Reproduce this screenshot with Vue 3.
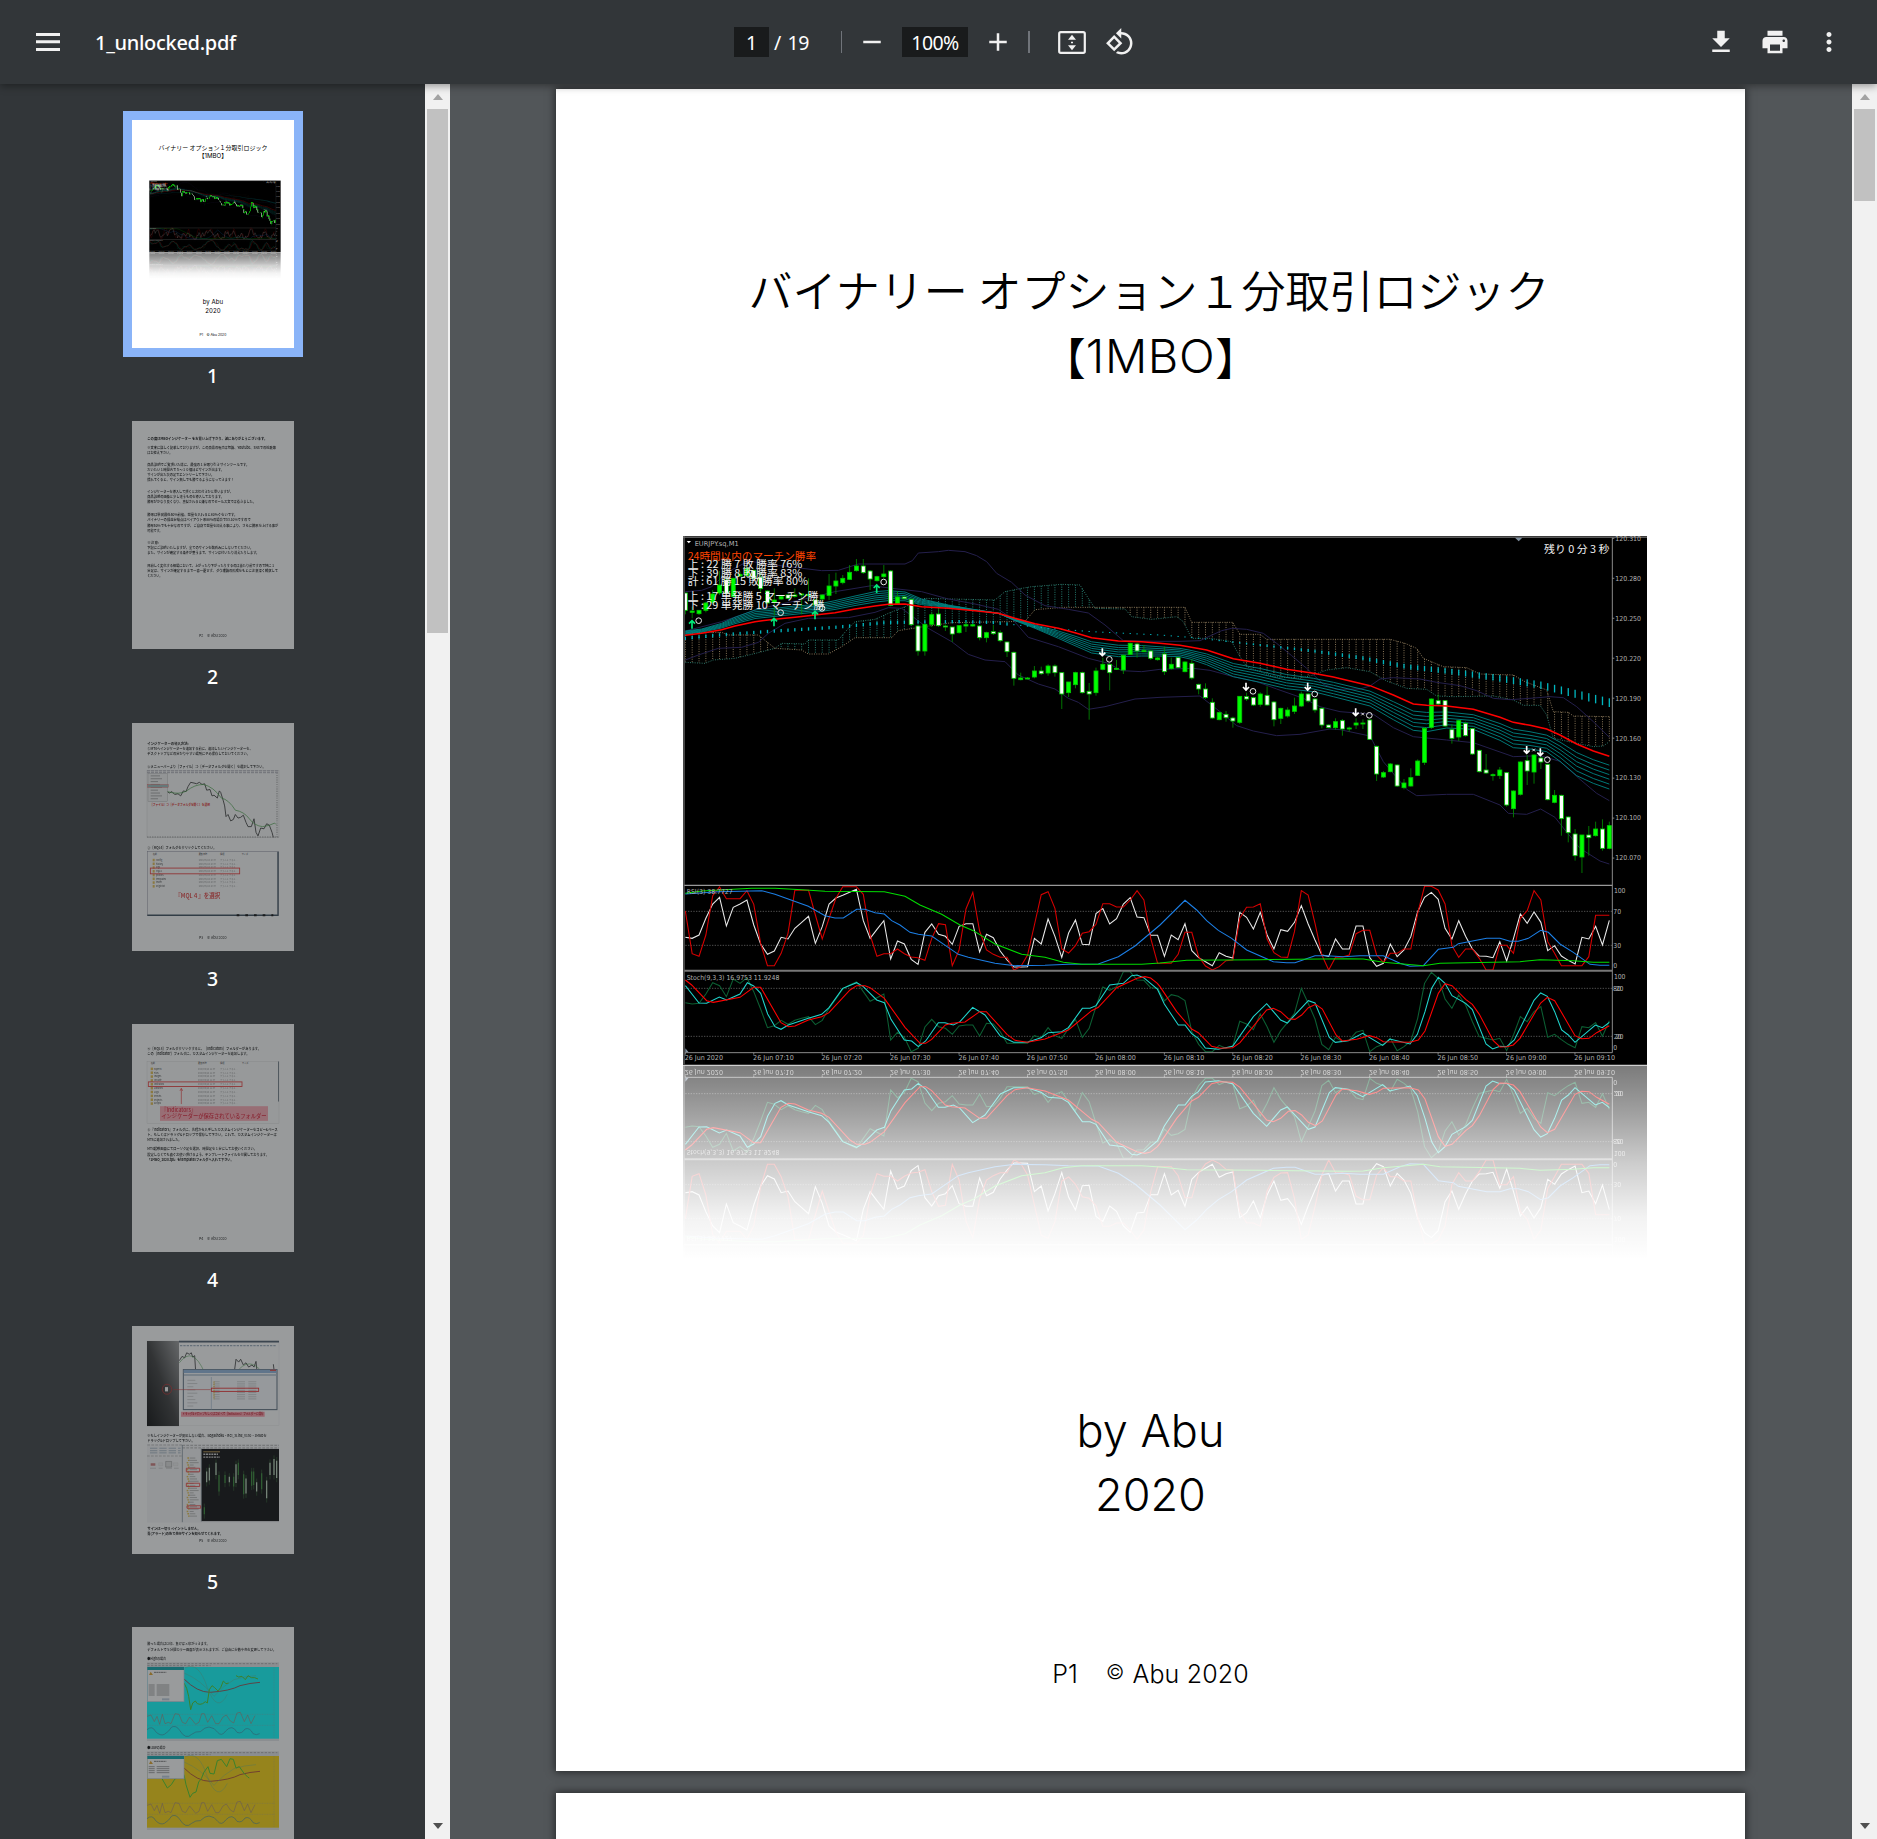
<script setup>
// Chart geometry is kept in a third-of-a-pixel grid; the right half of the
// plot is recorded relative to SPLIT and shifted when the lines are built.
const SPLIT = 1455
const STEP = 20.533
const barX = (i) => 31 + STEP * i

const parse = (s) => s.trim().split(/\s+/).map((p) => p.split(',').map(Number))
const join = (left, right) => [...parse(left), ...parse(right).map(([x, y]) => [x + SPLIT, y])]
const pts = (a) => a.map(([x, y]) => `${x.toFixed(1)},${y.toFixed(1)}`).join(' ')
const series = (s) => pts(s.trim().split(/\s+/).map((y, i) => [barX(i), Number(y)]))
const at = (line, x) => {
  for (let i = 1; i < line.length; i++) {
    if (x <= line[i][0]) {
      const [x0, y0] = line[i - 1]
      const [x1, y1] = line[i]
      return y0 + ((y1 - y0) * (x - x0)) / (x1 - x0 || 1)
    }
  }
  return line[line.length - 1][1]
}

// colour, body top, body bottom, high, low
const candles = `w,204,256,204,268 g,258,262,245,280 g,256,266,256,270 g,234,256,230,262 g,207,232,195,238 g,180,204,138,210
w,165,205,160,208 g,160,215,158,216 g,148,153,140,156 g,130,152,120,155 w,136,160,134,162 w,157,191,140,205 w,198,234,196,236
g,225,232,190,272 g,215,222,212,224 w,210,220,208,222 g,210,214,190,218 g,207,210,204,268 g,208,212,160,230 w,225,240,223,242
g,210,222,208,226 g,183,211,147,225 g,168,183,143,207 g,160,173,150,178 g,142,163,120,165 g,123,137,102,140 w,123,143,102,147
w,138,162,135,195 g,155,167,152,170 g,147,155,120,160 w,138,241,135,244 g,216,236,199,238 w,216,221,214,223 w,223,299,220,302
w,303,378,300,392 g,298,378,295,392 g,269,298,262,306 w,267,302,248,306 w,303,306,298,318 w,306,327,306,351 g,302,323,300,326
g,299,303,290,321 g,299,303,297,305 w,303,338,300,346 g,323,338,320,352 w,320,326,300,330 w,323,347,316,352 w,351,380,350,396
w,382,460,380,482 g,459,464,443,466 g,459,461,456,462 g,438,456,423,460 w,438,446,425,450 g,423,444,418,452 w,423,443,418,455
w,443,507,443,552 g,471,503,471,516 g,443,479,440,490 w,443,503,440,506 w,499,507,474,584 g,438,503,428,512 g,418,433,398,436
w,418,443,415,496 g,430,432,405,434 g,391,435,388,447 g,355,388,353,390 w,357,378,353,398 g,377,379,360,381 w,378,400,376,405
g,399,404,395,407 w,387,440,365,450 g,418,431,398,434 w,398,428,396,430 g,411,440,409,442 w,415,459,402,464 w,478,492,476,508
w,492,518,475,522 w,532,579,520,582 g,563,584,560,586 w,568,578,558,590 w,579,588,575,608 g,514,592,514,597 w,515,522,503,528
w,518,540,515,543 g,507,538,502,545 w,511,540,484,543 w,531,584,528,604 g,550,580,548,597 g,555,573,547,578 g,543,559,518,567
g,507,543,500,546 w,507,528,504,533 w,522,555,520,563 w,550,600,548,610 w,600,608,598,610 g,590,608,580,614 w,587,612,582,632
g,609,611,605,620 g,594,600,580,612 g,594,597,583,612 w,585,643,583,645 w,664,747,662,768 g,743,756,738,759 g,717,740,714,742
w,720,783,718,786 g,774,788,762,793 g,758,783,730,785 g,708,751,703,753 g,610,712,606,720 g,522,607,520,612 w,527,537,508,540
w,527,603,525,606 w,614,640,597,656 g,587,636,585,648 w,595,632,590,635 w,611,687,609,690 w,676,740,674,743 w,735,744,687,747
g,749,752,745,767 g,735,752,726,762 w,743,840,741,845 g,798,851,796,877 g,711,808,709,812 w,707,738,690,780 g,690,741,688,776
w,699,711,695,732 w,718,824,716,826 g,811,832,795,835 w,811,881,809,932 w,876,923,874,952 w,927,992,912,1007 g,930,996,930,1044
w,930,938,903,992 g,912,932,890,935 w,912,970,883,977 g,902,970,890,973`
  .trim()
  .split(/\s+/)
  .map((c, i) => {
    const [k, t, b, h, l] = c.split(',')
    return { x: barX(i), up: k === 'g', top: +t, bottom: Math.max(+b, +t + 3), high: +h, low: +l }
  })

const base = join(
  '31,331 80,325 140,314 180,303 240,290 300,283 360,277 420,270 480,263 540,252 600,243 640,238 690,237 740,245 820,250 900,257 970,265 1020,280 1080,296 1150,310 1200,323 1250,338 1330,348 1400,350',
  '0,355 60,361 90,366 140,375 220,401 300,415 380,433 460,445 520,456 630,482 700,510 760,537 800,541 860,543 940,553 1020,577 1060,592 1110,601 1160,612 1200,630 1250,657 1300,678 1348,694'
)
const edge = join(
  '31,318 80,312 140,295 180,277 240,255 300,250 360,243 420,239 480,227 540,213 600,200 640,197 690,201 740,222 820,240 900,254 970,265 1020,287 1080,310 1150,340 1200,362 1250,384 1330,395 1400,393',
  '0,393 60,395 90,402 140,419 220,455 300,472 380,491 460,500 520,515 630,543 700,584 760,616 800,620 860,609 940,613 1020,646 1060,668 1110,672 1160,680 1200,709 1250,752 1300,775 1348,792'
)
const ribbon = [0.27, 0.42, 0.56, 0.7, 0.85, 1].map((f) =>
  pts(base.map(([x, y], i) => [x, y + (edge[i][1] - y) * f]))
)
const bands = [
  join(
    '31,200 80,196 110,185 160,140 220,108 300,120 440,137 490,136 550,117 690,117 712,107 730,84 790,80 820,76 870,80 905,92 935,110 965,145 1010,172 1050,210 1110,242 1180,253 1240,264 1290,300 1345,347 1455,349',
    '60,349 120,347 150,333 185,317 215,310 260,313 310,325 350,355 395,392 440,430 490,478 530,493 600,492 630,483 660,462 700,458 780,462 830,472 900,482 950,497 1000,520 1050,524 1110,520 1170,515 1210,518 1250,545 1300,590 1348,637'
  ),
  join(
    '31,318 140,290 250,252 420,215 480,200 590,182 650,190 740,200 820,222 900,237 970,253 1010,280 1060,337 1150,365 1240,400 1300,415 1340,437 1400,440 1455,433',
    '100,430 150,436 220,455 290,470 350,492 430,520 480,545 540,560 640,568 700,608 760,635 860,645 940,653 1060,695 1140,692 1200,709 1260,763 1310,805 1348,827'
  ),
  join(
    '31,405 70,390 130,370 200,367 250,352 280,325 330,295 400,280 520,278 600,262 640,248 680,250 700,265 760,310 830,350 880,388 930,405 990,410 1030,450 1090,477 1140,492 1180,520 1210,532 1240,553 1290,545 1380,522 1455,517',
    '120,513 180,560 230,602 280,618 350,632 420,628 510,612 540,614 630,633 670,710 740,793 770,812 860,808 940,808 1020,840 1045,865 1100,868 1142,852 1185,877 1215,915 1260,970 1320,1008 1348,1017'
  )
].map(pts)

const spanA = join(
  '31,330 60,322 140,322 160,330 250,330 300,370 380,375 400,387 460,387 500,365 540,338 650,338 670,317 740,306 830,293 1050,289 1080,254 1165,247 1455,247',
  '75,247 95,292 218,292 240,328 300,328 320,343 690,343 735,355 770,370 790,400 850,425 920,428 960,447 1060,450 1095,470 1160,495 1180,560 1225,562 1240,573 1348,575'
)
const spanB = join(
  '31,412 90,415 115,405 180,400 230,388 300,370 320,355 390,357 400,345 490,345 520,310 540,290 600,283 640,265 690,245 750,220 960,225 990,200 1040,190 1070,185 1160,178 1215,180 1240,220 1260,250 1350,252 1370,275 1430,283',
  '5,280 50,275 70,290 95,340 150,340 215,350 240,395 260,425 300,440 340,455 420,460 460,450 500,435 560,428 630,440 680,468 740,490 800,493 830,513 880,515 1000,513 1060,525 1090,541 1140,541 1160,570 1180,640 1250,655 1300,665 1330,663 1348,650'
)
const cloud = candles.map(({ x }) => {
  const a = at(spanA, x)
  const b = at(spanB, x)
  return { x, y1: Math.min(a, b), y2: Math.max(a, b), color: a <= b ? '#a08a68' : '#2a9486' }
})
const trail = join(
  '31,340 133,330 300,318 480,307 640,292 850,290 950,292 1120,310 1250,320 1455,330',
  '0,330 90,337 180,347 300,360 460,378 600,398 740,425 860,438 1000,457 1140,480 1240,505 1348,533'
)
const ticks = candles.map(({ x }) => {
  const h = x < 1000 ? 10 : x < 1600 ? 3 : 3 + ((x - 1600) / 1200) * 23
  return { x, y: at(trail, x) - h / 2, h }
})

const rsiWhite = series(
  '187 190 180 130 87 67 153 97 87 75 150 207 238 228 187 192 160 142 124 205 155 87 69 61 52 43 137 190 163 137 252 198 207 253 268 172 147 178 184 208 154 146 146 231 178 188 228 255 276 276 275 190 207 132 184 247 174 135 208 209 116 101 147 131 87 68 126 128 181 181 244 180 194 146 227 248 260 272 233 244 249 112 127 162 112 180 222 164 169 142 92 147 195 240 244 192 222 222 153 153 248 274 265 207 245 225 185 110 67 52 73 160 192 137 184 222 243 244 248 200 258 190 117 145 111 142 227 212 243 256 267 187 192 154 210 136'
)
const rsiRed = series(
  '108 236 244 180 62 36 71 71 71 47 88 205 272 272 235 175 46 46 46 120 192 130 70 35 35 35 58 180 244 236 236 222 236 246 248 256 190 146 149 272 225 102 52 168 225 238 247 247 285 275 240 150 59 50 100 222 234 212 175 170 148 86 86 96 96 75 47 75 190 265 265 265 238 172 172 245 273 285 275 257 255 130 97 96 86 192 233 246 247 170 47 60 145 240 285 247 246 240 176 166 166 240 262 235 235 222 222 115 34 34 45 87 212 247 222 222 250 285 285 211 211 235 130 107 47 75 200 235 272 272 272 272 245 121 121 121'
)
const rsiBlue = pts(join(
  '31,57 130,50 260,47 300,58 400,94 450,122 480,129 505,129 545,103 570,103 600,113 628,117 650,137 675,150 705,172 730,178 770,183 790,197 850,238 880,247 960,265 1020,272 1110,271 1180,268 1270,267 1330,245 1380,213',
  '0,150 75,76 110,105 140,137 175,166 215,190 260,225 340,260 380,263 405,263 465,242 500,242 550,245 600,242 670,242 720,265 750,274 790,272 810,250 835,223 880,217 895,206 980,190 1020,190 1050,199 1075,199 1105,190 1142,166 1165,172 1200,207 1240,232 1290,268 1320,271 1348,271'
))
const rsiGreen = pts(join(
  '31,55 80,48 230,40 300,40 380,44 450,49 628,50 690,64 735,90 800,118 855,150 895,167 960,207 1040,238 1110,247 1165,262 1220,268 1400,268',
  '0,264 80,256 300,254 560,251 610,252 670,262 790,272 840,265 1080,260 1140,254 1240,257 1300,262 1348,262'
))
const stochRaw = series(
  '383 387 385 357 323 332 365 312 325 308 350 402 458 452 436 448 436 430 425 449 436 400 372 342 330 321 350 379 368 357 495 472 487 530 520 456 433 455 460 478 453 450 450 483 445 447 470 505 505 505 505 482 488 458 482 490 460 433 487 460 395 336 346 335 290 290 315 316 338 340 378 359 364 377 470 508 530 530 511 520 512 439 447 464 417 455 502 467 442 415 340 385 432 508 524 487 500 495 472 466 530 515 508 490 527 515 498 430 325 292 310 372 400 360 390 440 485 490 495 490 527 480 425 440 410 395 487 478 494 508 518 455 458 443 484 437'
)
const stochK = pts(join(
  '31,332 72,384 95,385 133,366 155,375 195,357 217,323 236,333 257,355 278,417 300,455 318,463 340,450 400,430 440,418 462,398 503,340 545,323 565,335 605,375 628,383 648,433 688,495 710,498 730,515 752,498 790,443 810,443 835,450 855,440 893,397 930,420 976,483 1016,502 1057,502 1098,488 1120,473 1160,470 1180,458 1222,400 1245,400 1263,392 1304,330 1345,325 1370,302 1386,300 1406,308 1447,342',
  '13,387 55,450 75,450 95,476 115,490 136,519 175,523 218,514 280,425 320,386 362,435 382,444 445,377 465,384 508,487 526,502 565,497 608,475 668,511 690,492 750,507 772,478 795,410 815,340 835,307 855,325 876,362 917,385 937,404 978,507 998,522 1020,514 1040,515 1063,495 1122,376 1142,354 1162,364 1184,410 1205,465 1225,480 1245,502 1306,450 1327,458 1348,442'
))
const stochD = pts(join(
  '31,315 50,330 95,377 115,382 195,367 236,337 257,337 318,443 340,455 360,453 400,435 440,425 462,413 525,345 545,332 570,332 585,338 628,370 690,457 735,505 752,505 770,493 811,450 830,445 870,441 914,410 934,410 996,478 1020,496 1057,502 1110,492 1180,465 1250,407 1270,397 1325,338 1386,310 1410,305 1427,309 1447,325',
  '0,335 50,410 95,462 115,473 155,514 180,520 218,518 240,503 320,405 340,400 362,410 385,431 405,433 425,420 445,398 467,388 487,402 528,480 547,498 590,493 628,482 650,488 670,500 750,502 775,495 795,468 835,355 855,326 876,332 917,373 937,388 958,418 1000,497 1020,516 1040,515 1060,510 1080,490 1142,384 1162,367 1184,377 1245,482 1265,491 1287,490 1310,473 1348,452'
))

const prices = ['120.310', '120.280', '120.250', '120.220', '120.190', '120.160', '120.130', '120.100', '120.070']
const times = ['26 Jun 2020', '26 Jun 07:10', '26 Jun 07:20', '26 Jun 07:30', '26 Jun 07:40', '26 Jun 07:50', '26 Jun 08:00', '26 Jun 08:10', '26 Jun 08:20', '26 Jun 08:30', '26 Jun 08:40', '26 Jun 08:50', '26 Jun 09:00', '26 Jun 09:10']
const overlay = [
  ['上 :  22 勝  7 敗  勝率 76%', 130, 344],
  ['下 :  39 勝  8 敗  勝率 83%', 155, 344],
  ['計 :  61 勝 15 敗  勝率 80%', 181, 361],
  ['上 :  17 単発勝  5 マーチン勝', 226, 392],
  ['下 :  29 単発勝 10 マーチン勝', 252, 410]
]
const rings = [[71, 287], [317, 263], [441, 250], [626, 171], [1303, 403], [1734, 499], [1919, 507], [2083, 571], [2617, 704]]
const ups = [[51, 285], [297, 278], [420, 257], [605, 178]]
const downs = [[1282, 394], [1713, 497], [1898, 497], [2042, 574], [2555, 687], [2596, 694]]
const crosses = [[2063, 567], [2576, 675]]

// text, baseline y, right end, bold
const page2 = [
  ['この度はMBOインジケーター をお買い上げ下さり、誠にありがとうございます。', 115, 472, 1],
  ['※文末に詳しく記載しておりますが、この商品の転売は勿論、Youtube、SNSでの拡散等', 140, 498],
  ['はお控え下さい。', 154, 187],
  ['商品説明でご覧頂いた様に、最強の１分取り引きサインツールです。', 188, 418],
  ['だいたい１時間内で５〜１０個ほどサインが出ます。', 202, 342],
  ['サインが出た次の足でエントリーして下さい。', 216, 313],
  ['慣れてくると、サイン無しでも勝てるようになってきます！', 230, 373],
  ['インジケーターを導入して頂くとお気付きかと思いますが、', 264, 369],
  ['商品説明の画像と少し違うものを導入しております。', 277, 342],
  ['勝率がかなり良くなり、真似されると嫌なのでセールス文では省きました。', 291, 438],
  ['勝率は単発最低60%前後、裁量を入れると80%ぐらいです。', 328, 382],
  ['バイナリーの損益分岐点はペイアウト率88%の場合で53.10%ですので', 342, 422],
  ['勝率60%でも十分なのですが、ご自身で裁量を加える事により、さらに勝率を上げる事が', 359, 505],
  ['可能です。', 373, 157],
  ['※注意:', 406, 147],
  ['下記にご説明いたしますが、全てのサインを鵜呑みにしないでください。', 420, 430],
  ['また、サインが確定する条件が整うまで、サインは付いたり消えたりします。', 434, 448],
  ['目紛しく変化する相場において、上がったり下がったりするのは当たり前ですので特に１', 471, 494],
  ['分足は、サインが確定するまで一喜一憂せず、ダウ理論の形成をもとに注意深く観察して', 485, 504],
  ['ください。', 499, 157]
]
const page3 = [
  ['インジケーターの導入方法:', 966, 236, 1],
  ['①MT4へインジケーターを追加する前に、追加したいインジケーターを、', 980, 428],
  ['デスクトップなどの分かりやすい場所に予め保存しておいてください。', 994, 420],
  ['②メニューバーより［ファイル］⇒［データフォルダを開く］を選択して下さい。', 1030, 467],
  ['③［MQL4］フォルダをクリックしてください。', 1257, 319]
]
const page4 = [
  ['④［MQL4］フォルダクリックすると、［Indicators］フォルダーがあります。', 143, 453],
  ['この［Indicator］フォルダに、カスタムインジケーターを追加します。', 157, 418],
  ['⑤『Indicators』フォルダに、先程から入手したカスタムインジケーターをコピー&ペース', 370, 503],
  ['ト、もしくはドラッグ&ドロップで保存して下さい。これで、カスタムインジケーターは', 384, 500],
  ['MT4に追加されました。', 398, 214],
  ['MT4起動画面にてローソク足を選択、時間足を１分にしてお使いください。', 423, 441],
  ['設定しなくても直ぐお使い頂けるよう、テンプレートファイルを付属しております。', 440, 477],
  ['「1MBO_2020.tpl」をtemplatesフォルダへ入れて下さい。', 454, 371, 1]
]
const page5 = [
  ['※もしインジケーターが反応しない場合、Bogashoku・RCI_3Line_v130・1MBOを', 1224, 470],
  ['ドラッグ&ドロップして下さい。', 1238, 254],
  ['サインは一切リペイントしません。', 1484, 272, 1],
  ['青(アラート)の色で先行サインを知らせてくれます。', 1498, 339, 1]
]
const page6 = [
  ['勝った場合は〇印、負けは×印がつきます。', 257, 299],
  ['デフォルトで５分間カラー画面が表示されますが、ご自由に分数や色を変更して下さい。', 276, 499],
  ['●Highの場合', 303, 168],
  ['●Lowの場合', 570, 167]
]
const thumbs = [
  { n: 2, box: '66 62 486 638', lines: page2, foot: 666 },
  { n: 3, box: '66 904 486 638', lines: page3, foot: 1509 },
  { n: 4, box: '66 70 486 638', lines: page4, foot: 675 },
  { n: 5, box: '66 913 486 638', lines: page5, foot: 1518 },
  { n: 6, box: '66 204 486 684', lines: page6 }
]
const folders3 = ['config', 'history', 'logs', 'MQL4', 'profiles', 'templates', 'tester', 'origin.txt']
const folders4 = ['Experts', 'Files', 'Images', 'Include', 'Indicators', 'Libraries', 'Logs', 'Presets', 'Projects', 'Scripts']
const bars5 = [[283, 1420, 1440], [290, 1320, 1350], [298, 1310, 1345], [318, 1296, 1330], [327, 1330, 1376], [345, 1330, 1352], [358, 1335, 1350], [371, 1335, 1362], [378, 1300, 1352], [385, 1296, 1330], [401, 1328, 1384], [408, 1340, 1382], [425, 1320, 1360], [431, 1320, 1358], [440, 1350, 1376], [455, 1325, 1370], [470, 1345, 1395], [480, 1296, 1330], [492, 1285, 1330], [500, 1290, 1338]]
</script>

<template>
  <div class="viewer">
    <header class="toolbar">
      <svg class="menu" width="24" height="18" viewBox="0 0 24 18"><path d="M0 0h24v3H0zM0 7.3h24v3H0zM0 15h24v3H0z" /></svg>
      <span class="filename">1_unlocked.pdf</span>
      <div class="center">
        <span class="field page-field">1</span>
        <span class="total">/ 19</span>
        <i class="rule thin"></i>
        <svg class="ico minus" viewBox="0 0 24 24"><path d="M19 13H5v-2h14v2z" /></svg>
        <span class="field zoom-field">100%</span>
        <svg class="ico plus" viewBox="0 0 24 24"><path d="M19 13h-6v6h-2v-6H5v-2h6V5h2v6h6v2z" /></svg>
        <i class="rule"></i>
        <svg class="fit" width="28" height="23" viewBox="0 0 28 23">
          <rect x="1.2" y="1.2" width="25.6" height="20.6" rx="1.6" fill="none" stroke="#f1f1f1" stroke-width="2.2" />
          <path d="M14 3.8l4 5h-8zM14 19.2l4-5h-8zM13 10.7h2v1.6h-2z" />
        </svg>
        <svg class="ico rotate" viewBox="0 0 24 24"><path d="M7.34 6.41L.86 12.9l6.49 6.48 6.49-6.48-6.5-6.49zM3.69 12.9l3.66-3.66L11 12.9l-3.66 3.66-3.65-3.66zm15.67-6.26C17.61 4.88 15.3 4 13 4V.76L8.76 5 13 9.24V6c1.79 0 3.58.68 4.95 2.05 2.73 2.73 2.73 7.17 0 9.9C16.58 19.32 14.79 20 13 20c-.97 0-1.94-.21-2.84-.61l-1.49 1.49C10.02 21.62 11.51 22 13 22c2.3 0 4.61-.88 6.36-2.64 3.52-3.51 3.52-9.21 0-12.72z" /></svg>
      </div>
      <div class="actions">
        <svg class="ico" viewBox="0 0 24 24"><path d="M19 9h-4V3H9v6H5l7 7 7-7zM5 18v2h14v-2H5z" /></svg>
        <svg class="ico" viewBox="0 0 24 24"><path d="M19 8H5c-1.66 0-3 1.34-3 3v6h4v4h12v-4h4v-6c0-1.66-1.34-3-3-3zm-3 11H8v-5h8v5zm3-7c-.55 0-1-.45-1-1s.45-1 1-1 1 .45 1 1-.45 1-1 1zm-1-9H6v4h12V3z" /></svg>
        <svg class="ico" viewBox="0 0 24 24"><path d="M12 8c1.100 0 2-.9 2-2s-.9-2-2-2-2 .9-2 2 .9 2 2 2zm0 2c-1.100 0-2 .9-2 2s.9 2 2 2 2-.9 2-2-.9-2-2-2zm0 6c-1.100 0-2 .9-2 2s.9 2 2 2 2-.9 2-2-.9-2-2-2z" /></svg>
      </div>
    </header>

    <div class="body">
      <nav class="sidebar">
        <div class="item">
          <div class="frame selected">
            <svg class="thumb" viewBox="0 0 1189 1682" preserveAspectRatio="none">
              <rect width="1189" height="1682" fill="#fff" />
              <g class="cover" text-anchor="middle" font-size="45">
                <text class="jp" x="594" y="218" font-size="44">バイナリー オプション１分取引ロジック</text>
                <text x="594" y="284">【1MBO】</text>
                <text x="594" y="1359">by Abu</text>
                <text x="594" y="1423">2020</text>
                <text x="594" y="1595" font-size="25">P1　© Abu 2020</text>
              </g>
              <use href="#figure" transform="translate(119 436) scale(.33333)" />
            </svg>
          </div>
          <span class="label">1</span>
        </div>
        <div v-for="t in thumbs" :key="t.n" class="item">
          <div class="frame">
            <svg class="thumb dim" :viewBox="t.box" preserveAspectRatio="none">
              <rect x="0" y="0" width="700" height="1700" fill="#fff" />
              <template v-if="t.n === 3">
                <rect x="111" y="1037" width="396" height="188" fill="#fbfbfb" stroke="#bbb" stroke-width="1" />
                <path d="M111 1038h396M111 1043h396" stroke="#889" stroke-width="2" stroke-dasharray="9 3" />
                <path d="M501 1045v178M111 1223h396" stroke="#999" stroke-width="4" stroke-dasharray="2 3" />
                <path d="M172 1096l6 4 8-4 8 8 10-2 8 6 8-14 8 2 6-14 8-12 10 2 8 2 8-4 8 6 8-2 6 18 10-2 6 18 6-2 10 8 6-20 4 4 8 24 4 14 4 30 6-6 8 18 8-4 6-14 8 10 8-2 8-6 8 20 6 12 10 0 8-22 6 38 6 10 8-22 10 2 8-14 8 4 8 20 4 14" fill="none" stroke="#333" stroke-width="2.600" />
                <path d="M172 1096q36 10 58-2q24-18 50-18q30 6 54 38q22 4 42 34q26 4 42 24q16 20 40 22q20-2 36-10l4 4" fill="none" stroke="#3a9a3a" stroke-width="2" />
                <rect x="114" y="1045" width="58" height="79" fill="#f3f3f3" stroke="#999" />
                <path v-for="k in 9" :key="k" :d="`M122 ${1044 + k * 8}h${22 + (k % 3) * 6}`" stroke="#999" stroke-width="2.500" />
                <rect x="113" y="1076" width="62" height="8" fill="#9bb" stroke="#e44" />
                <text class="jp" x="120" y="1137" font-size="9.500" fill="#e02020" font-weight="700" textLength="180" lengthAdjust="spacingAndGlyphs">［ファイル］⇒［データフォルダを開く］を選択</text>
                <rect x="112" y="1264" width="394" height="178" fill="#fcfcfc" stroke="#889" stroke-width="1.500" />
                <path d="M504 1264v178M112 1442h394" stroke="#345" stroke-width="4" />
                <path d="M380 1442h110" stroke="#000" stroke-width="6" stroke-dasharray="8 18" />
                <g class="tiny">
                  <text x="128" y="1274">名前</text><text x="266" y="1274">更新日時</text><text x="330" y="1274">種類</text><text x="395" y="1274">サイズ</text>
                  <g v-for="(f, k) in folders3" :key="f">
                    <rect x="128" :y="1284 + k * 10.5" width="6" height="7" fill="#e4bd4a" />
                    <text x="138" :y="1290 + k * 10.5">{{ f }}</text>
                    <text x="266" :y="1290 + k * 10.5" opacity=".6">2020/05/28 10:37</text>
                    <text x="330" :y="1290 + k * 10.5" opacity=".6">ファイル フォル...</text>
                  </g>
                </g>
                <rect x="121" y="1310" width="268" height="16" fill="none" stroke="#e33" stroke-width="2.500" />
                <text class="jp" x="196" y="1394" font-size="18" fill="#e02020" font-weight="500" textLength="135" lengthAdjust="spacingAndGlyphs">『MQL４』を選択</text>
              </template>
              <template v-if="t.n === 4">
                <rect x="111" y="175" width="396" height="174" fill="#fcfcfc" stroke="#ccc" />
                <path d="M505.500 175v112" stroke="#345" stroke-width="2" />
                <g class="tiny">
                  <text x="122" y="182">名前</text><text x="264" y="182">更新日時</text><text x="330" y="182">種類</text><text x="396" y="182">サイズ</text>
                  <g v-for="(f, k) in folders4" :key="f">
                    <rect x="122" :y="192 + k * 10.8" width="7" height="7" fill="#e4bd4a" />
                    <text x="132" :y="198 + k * 10.8">{{ f }}</text>
                    <text x="264" :y="198 + k * 10.8" opacity=".6">2020/05/28 11:37</text>
                    <text x="330" :y="198 + k * 10.8" opacity=".6">ファイル フォル...</text>
                  </g>
                </g>
                <rect x="115" y="232" width="281" height="13" fill="none" stroke="#e33" stroke-width="2.500" />
                <path d="M214 294v-43m-4 6l4-7 4 7" fill="none" stroke="#e33" stroke-width="2" />
                <rect x="150" y="300" width="324" height="41" fill="#ffa6b2" />
                <g class="jp" fill="#e01830" font-weight="500" font-size="16">
                  <text x="154" y="317" textLength="104" lengthAdjust="spacingAndGlyphs">『Indicators』</text>
                  <text x="154" y="332" textLength="316" lengthAdjust="spacingAndGlyphs">インジケーターが保存されているフォルダー</text>
                </g>
              </template>
              <template v-if="t.n === 5">
                <rect x="111" y="955" width="396" height="237" fill="#fff" stroke="#ddd" />
                <rect x="111" y="955" width="96" height="238" fill="url(#desk)" />
                <path d="M207 957h300" stroke="#456" stroke-width="5" />
                <path d="M210 968h290" stroke="#9ab" stroke-width="4" stroke-dasharray="7 3" />
                <path d="M208 1010l8-12 8 4 6-14 8 4 6-4 4 12 6-4 4 60m114-8l6-42 8 8 6-8 8 16 8-6 8 12 10-6 6 6 6-16 4 38m48-30l4 30v60" fill="none" stroke="#333" stroke-width="2.500" />
                <path d="M208 1016q40-50 76 28m94 0q40-50 80 0" fill="none" stroke="#3a9a3a" stroke-width="1.500" />
                <rect x="220" y="1035" width="281" height="112" fill="#fafcff" stroke="#567" stroke-width="3" />
                <path d="M221 1040h279" stroke="#8fb4dc" stroke-width="9" />
                <path d="M480 1037h18" stroke="#d44" stroke-width="4" />
                <path d="M222 1050h278" stroke="#abc" stroke-width="4" /><path d="M304 1056v90" stroke="#bcd" stroke-width="3" />
                <path v-for="k in 9" :key="k" :d="`M232 ${1056 + k * 9}h${18 + (k % 3) * 6}M312 ${1063 + k * 6}h17m52 0h24m10 0h24`" stroke="#bbb" stroke-width="2" />
                <path d="M312 1068v50" stroke="#e4bd4a" stroke-width="4" stroke-dasharray="4 2" />
                <path d="M165 1084h9v12h-9z" fill="#fff" />
                <circle cx="171" cy="1090" r="14" fill="none" stroke="#c22" stroke-width="2" />
                <path d="M190 1091h112" stroke="#c22" stroke-width="1.500" />
                <rect x="304" y="1087" width="142" height="9" fill="none" stroke="#e22" stroke-width="2.500" />
                <rect x="213" y="1153" width="251" height="14" fill="#ff9aa8" />
                <text class="jp" x="217" y="1163" font-size="8.500" fill="#c01020" font-weight="700" textLength="244" lengthAdjust="spacingAndGlyphs">ドラッグ&ドロップもしくはコピペで［Indicators］フォルダーに保存</text>
                <rect x="111" y="1244" width="396" height="219" fill="#f6f6f6" />
                <path d="M111 1277h104M112 1246h104M217 1247h290M217 1254h290" stroke="#bbb" stroke-width="3" stroke-dasharray="8 4" />
                <path d="M120 1255h92M120 1262h92M120 1268h92" stroke="#9ab" stroke-width="2.500" stroke-dasharray="22 6" />
                <path d="M122 1297h14v7h-14z" fill="#c77" /><path d="M167 1292h18v16h-18z" fill="#ddd" stroke="#555" />
                <path d="M146 1296h12v8h-12zM190 1296h14v8h-14z" fill="#eee" stroke="#ccc" />
                <path d="M120 1311h18m8 0h12m10 0h18m6 0h14" stroke="#bbb" stroke-width="2" />
                <path d="M217 1246v216M274 1256v204" stroke="#678" stroke-width="2" />
                <path v-for="k in 26" :key="'t' + k" :d="`M${230 + (k % 3) * 2} ${1276 + k * 6.500}h5`" stroke="#e4bd4a" stroke-width="4" />
                <path v-for="k in 26" :key="'u' + k" :d="`M239 ${1276 + k * 6.500}h${12 + (k % 4) * 5}`" stroke="#aaa" stroke-width="2.500" />
                <path d="M229 1311h40v10h-40zM229 1353h40v9h-40zM231 1416h41v7h-41z" fill="none" stroke="#e33" stroke-width="2.500" />
                <rect x="275" y="1257" width="232" height="202" fill="#000" />
                <path d="M280 1265h50" stroke="#a84" stroke-width="3" /><path d="M280 1272h44M280 1280h50" stroke="#ccc" stroke-width="4" stroke-dasharray="6 2" />
                <g v-for="b in bars5" :key="b[0]">
                  <path :d="`M${b[0]} ${b[1] - 10}V${b[2] + 12}`" stroke="#2a6a2a" stroke-width="1.500" />
                  <path :d="`M${b[0]} ${b[1]}V${b[2]}`" :stroke="b[0] % 2 ? '#2f8a2f' : '#c8e0c8'" stroke-width="3.500" />
                </g>
              </template>
              <template v-if="t.n === 6">
                <g v-for="m in [{ y: 310, c: '#00a3a8', h: 236 }, { y: 577, c: '#fad200', h: 236 }]" :key="m.y">
                  <rect x="111" :y="m.y" width="396" :height="m.h" fill="#e4e6e8" />
                  <path :d="`M112 ${m.y + 4}h390M112 ${m.y + 10}h190`" stroke="#aaa" stroke-width="3" stroke-dasharray="7 4" />
                  <rect x="111" :y="m.y + 14" width="396" height="215" :fill="m.y < 400 ? '#00ffff' : '#fad200'" />
                  <g :transform="`translate(0 ${m.y - 310})`" fill="none">
                    <path d="M492 324v214M111 466h384M111 499h384" stroke="#999" stroke-width="1" stroke-dasharray="3 2" />
                    <path d="M111 472l12-4 10 20 8-16 8 24 8-30 8 28 10-4 8 4 12-30 12 2 10 24 10 4 12-20 10 12 8 10 10-6 8-26 8 0 10 26 12-20 12 24 10 0 12-20 10-6 12 18 10 6 10-30 10-2 12 28 10-20 10 26 12-24" stroke="#a08070" stroke-width="1.800" />
                    <path d="M111 512q16-14 26 6q14 14 26 8q14-8 22-22q14-6 24 10q18 30 36 12q12-10 26-8q14-14 26-14q18 2 26 16q12 14 24-4q20-22 34 4q14 6 24-10q14-6 24 14q10 6 20 0" stroke="#38809a" stroke-width="1.800" />
                    <path d="M222 360q40 40 78 40q60-4 90-20q30-8 60-10" stroke="#a03030" stroke-width="2.500" />
                    <path d="M222 342q50 20 90 70q30-34 60-50q30-10 66-12M226 326q40-20 66 60q30 80 60 20" stroke="#5fae8a" stroke-width="1.200" />
                    <template v-if="m.y < 400">
                      <path d="M222 372l8 16 6 24 6 40 6-20 8-6 6 8 8 2 8-2 8-6 6 4 6-40 8-12 8 6 10 10 8-10 8-20 8 8 8-2" stroke="#44cc20" stroke-width="3" />
                      <path d="M378 350l8 4 10-2 10 10 8-12 10 6 10 0 10 4" stroke="#44cc20" stroke-width="3" />
                    </template>
                    <path v-else d="M156 392l16 28 12-10 10-16 8-6 20-8 6 30 12 38 8-12 10-4 8-30 8-10 8-20 12-16 6 20 12 2 10-40 12-4 16 22 10-24 10 2 8 26 10-4 14 20 12 12 4 2" stroke="#44cc20" stroke-width="3" />
                  </g>
                  <rect x="112" :y="m.y + 14" width="110" :height="m.y < 400 ? 104 : 68" fill="#fff" stroke="#bcd" stroke-width="2" />
                  <rect x="112" :y="m.y + 14" width="110" height="9" fill="#00a4ac" />
                  <path :d="`M117 ${m.y + 38}l5-10 7 10z`" fill="#e0a020" />
                  <path :d="`M132 ${m.y + 30}h37`" stroke="#777" stroke-width="3" stroke-dasharray="6 1" />
                  <path v-for="k in (m.y < 400 ? 6 : 4)" :key="k" :d="`M116 ${m.y + 36 + (m.y < 400 ? 26 : 4) + k * 6}h62`" stroke="#888" stroke-width="2.500" stroke-dasharray="18 6 38 2" />
                  <rect x="156" :y="m.y + (m.y < 400 ? 108 : 73)" width="22" height="6" fill="#bcd" />
                </g>
              </template>
              <g class="doc">
                <text v-for="l in t.lines" :key="l[1]" x="112" :y="l[1]" :textLength="l[2] - 112" lengthAdjust="spacingAndGlyphs" :font-weight="l[3] ? 700 : 500">{{ l[0] }}</text>
                <text v-if="t.foot" x="267" :y="t.foot" textLength="83" lengthAdjust="spacingAndGlyphs">P{{ t.n }}　© Abu 2020</text>
              </g>
            </svg>
          </div>
          <span v-if="t.n < 6" class="label">{{ t.n }}</span>
        </div>
      </nav>
      <div class="scroll"><i class="up"></i><b class="knob long"></b><i class="down"></i></div>

      <main class="content">
        <article class="page">
          <h1>バイナリー オプション１分取引ロジック</h1>
          <h1 class="second"><span>【</span><span class="latin">1MBO</span><span>】</span></h1>
          <svg class="chart" width="965" height="725" viewBox="24 33 2895 2175">
            <defs>
              <linearGradient id="desk" x1="1" y1="0" x2="0" y2="1"><stop offset="0" stop-color="#999" /><stop offset=".5" stop-color="#333" /><stop offset="1" stop-color="#000" /></linearGradient>
              <linearGradient id="fade" gradientUnits="userSpaceOnUse" x1="0" y1="1620" x2="0" y2="2205">
                <stop offset="0" stop-color="#fff" stop-opacity=".52" />
                <stop offset=".25" stop-color="#fff" stop-opacity=".37" />
                <stop offset=".5" stop-color="#fff" stop-opacity=".2" />
                <stop offset=".78" stop-color="#fff" stop-opacity=".05" />
                <stop offset="1" stop-color="#fff" stop-opacity="0" />
              </linearGradient>
              <mask id="fadeMask" maskUnits="userSpaceOnUse" x="0" y="1620" width="2930" height="600"><rect x="0" y="1620" width="2930" height="600" fill="url(#fade)" /></mask>
              <clipPath id="plot"><rect x="30" y="38" width="2782" height="1600" /></clipPath>
              <g id="terminal">
                <rect x="24" y="33" width="2892" height="1587" fill="#000" />
                <g clip-path="url(#plot)">
                  <g stroke-width="2.500" stroke-dasharray="3 4">
                    <path v-for="c in cloud" :key="c.x" :d="`M${c.x} ${c.y1}V${c.y2}`" :stroke="c.color" />
                    <polyline :points="pts(spanA)" fill="none" stroke="#a08a68" />
                    <polyline :points="pts(spanB)" fill="none" stroke="#368e7e" />
                  </g>
                  <polyline v-for="(b, i) in bands" :key="'b' + i" :points="b" fill="none" stroke="#241f4c" stroke-width="3" />
                  <polyline v-for="(r, i) in ribbon" :key="'r' + i" :points="r" fill="none" stroke="#008483" stroke-width="2.700" />
                  <rect v-for="t in ticks" :key="'t' + t.x" :x="t.x - 2" :y="t.y" width="4" :height="t.h" fill="#00b4bd" />
                  <g v-for="c in candles" :key="'c' + c.x">
                    <path :d="`M${c.x} ${c.high}V${c.low}`" stroke="#008c00" stroke-width="2.500" />
                    <rect :x="c.x - 6" :y="c.top" width="12" :height="c.bottom - c.top" :fill="c.up ? '#0f0' : '#fff'" stroke="#00c800" stroke-width="2.500" />
                  </g>
                  <polyline :points="pts(base)" fill="none" stroke="#f00" stroke-width="4.500" />
                  <g transform="translate(0 1050)" fill="none" stroke-width="3.200">
                    <path d="M31 109H2812M31 211H2812M31 340H2812M31 484H2812" stroke="#777" stroke-width="2" stroke-dasharray="4 4" />
                    <polyline :points="rsiWhite" stroke="#e8e8e8" />
                    <polyline :points="rsiRed" stroke="#d80000" />
                    <polyline :points="rsiBlue" stroke="#1c7fe6" />
                    <polyline :points="rsiGreen" stroke="#0d0" />
                    <polyline :points="stochRaw" stroke="#0c5f33" />
                    <polyline :points="stochK" stroke="#20d5cd" />
                    <polyline :points="stochD" stroke="#f00" />
                  </g>
                </g>
                <g fill="none" stroke="#e8e8e8" stroke-width="3">
                  <circle v-for="r in rings" :key="r[0]" :cx="r[0]" :cy="r[1]" r="8.500" />
                  <path v-for="c in crosses" :key="c[0]" :d="`M${c[0] - 4} ${c[1] - 4}l8 8m0-8l-8 8`" />
                  <path v-for="d in downs" :key="d[0]" :d="`M${d[0]} ${d[1]}v-24m-9 13l9 9 9-9`" stroke="#fff" stroke-width="5" />
                  <path v-for="u in ups" :key="u[0]" :d="`M${u[0]} ${u[1]}v26m-9 -15l9-9 9 9`" stroke="#00e878" stroke-width="5" />
                </g>
                <path d="M27 33V1618" stroke="#555" stroke-width="5" />
                <path d="M24 36.500H2916" stroke="#777" stroke-width="3.500" />
                <path d="M2812 38V1583M30 1583H2812" stroke="#8a8a8a" stroke-width="3" fill="none" />
                <path d="M28 1081H2812" stroke="#999" stroke-width="4" />
                <path d="M28 1337.500H2812" stroke="#777" stroke-width="6" />
                <path d="M2520 38h22l-11 11z" fill="#7d8d9d" />
                <path d="M31 1570l10 12H31z" fill="#8090a0" />
                <path d="M35 48h13l-6.500 7z" fill="#fff" />
                <g class="axis">
                  <text x="59" y="62" textLength="132" lengthAdjust="spacingAndGlyphs">EURJPY.sq,M1</text>
                  <text x="35" y="1106" textLength="138" lengthAdjust="spacingAndGlyphs">RSI(3) 38.7727</text>
                  <text x="35" y="1364" textLength="278" lengthAdjust="spacingAndGlyphs">Stoch(9,3,3) 16.9753 11.9248</text>
                  <g v-for="(p, i) in prices" :key="p">
                    <path :d="`M2812 ${40 + i * 119.900}h6`" stroke="#999" stroke-width="2.500" />
                    <text x="2821" :y="47 + i * 119.900" textLength="77" lengthAdjust="spacingAndGlyphs">{{ p }}</text>
                  </g>
                  <text x="2817" y="1105" textLength="34">100</text><text x="2815" y="1167">70</text><text x="2815" y="1269">30</text><text x="2815" y="1330">0</text>
                  <text x="2817" y="1361" textLength="34">100</text><text x="2814" y="1398">80</text><text x="2822" y="1398">20</text><text x="2816" y="1541">20</text><text x="2822" y="1541">20</text><text x="2815" y="1576">0</text>
                  <g v-for="(t, i) in times" :key="t">
                    <path :d="`M${31 + i * 205.300} 1583v6`" stroke="#999" stroke-width="2.500" />
                    <text :x="29 + i * 205.300" y="1606" :textLength="i ? 122 : 115" lengthAdjust="spacingAndGlyphs">{{ t }}</text>
                  </g>
                </g>
                <g class="stats">
                  <text x="38" y="104" fill="#ff4500" textLength="385" lengthAdjust="spacingAndGlyphs">24時間以内のマーチン勝率</text>
                  <text v-for="o in overlay" :key="o[1]" x="38" :y="o[1]" :textLength="o[2]" lengthAdjust="spacingAndGlyphs">{{ o[0] }}</text>
                  <text x="2607" y="84" textLength="196" lengthAdjust="spacingAndGlyphs">残り 0 分 3 秒</text>
                </g>
              </g>
              <g id="figure">
                <use href="#terminal" />
                <g mask="url(#fadeMask)"><use href="#terminal" transform="matrix(1 0 0 -1 0 3240)" /></g>
                <path d="M24 1621H2916" stroke="#d0d0d0" stroke-width="4" />
              </g>
            </defs>
            <use href="#figure" />
          </svg>
          <p class="author">by Abu<br />2020</p>
          <p class="footer"><span>P1</span><span class="copy">©</span><span>Abu 2020</span></p>
        </article>
        <article class="page next"></article>
      </main>
      <div class="scroll"><i class="up"></i><b class="knob"></b><i class="down"></i></div>
    </div>
  </div>
</template>

<style>
body { margin: 0; background: #525659; overflow: hidden; }
</style>

<style scoped>
.viewer { width: 1877px; height: 1839px; display: flex; flex-direction: column; overflow: hidden; font-family: "Noto Sans", "Open Sans", sans-serif; color: #fff; }
.toolbar { position: relative; z-index: 2; flex: none; box-sizing: border-box; height: 84px; padding: 0 33px 0 36px; display: flex; align-items: center; background: #323639; box-shadow: 0 2px 8px rgba(0, 0, 0, .4); fill: #f1f1f1; }
.filename { width: 639px; margin-left: 35px; padding-top: 2px; font-size: 20px; font-weight: 500; line-height: 30px; letter-spacing: -.3px; }
.ico { width: 30px; height: 30px; display: block; }
.center { display: flex; align-items: center; font-size: 19.500px; line-height: 30px; }
.field { height: 30px; background: #191b1c; text-align: center; line-height: 32px; }
.page-field { width: 35px; }
.zoom-field { width: 66px; margin-left: 15px; letter-spacing: -.6px; }
.total { width: 62px; margin-left: 5px; padding-top: 2px; word-spacing: 2px; letter-spacing: -.4px; }
.rule { width: 2px; height: 22px; background: #70747a; }
.rule.thin { width: 1px; margin-left: 5px; }
.minus { margin-left: 15px; }
.plus { margin-left: 15px; }
.plus + .rule { margin-left: 15px; }
.fit { margin-left: 28px; }
.rotate { margin-left: 19px; }
.actions { margin-left: auto; display: flex; gap: 24px; }
.body { flex: 1; min-height: 0; display: flex; }
.sidebar { width: 425px; overflow: hidden; background: #323639; box-sizing: border-box; padding-top: 27px; display: flex; flex-direction: column; align-items: center; }
.item { flex: none; height: 301.400px; display: flex; flex-direction: column; align-items: center; }
.frame { padding: 9px; height: 228px; }
.selected { background: #8ab4f8; }
.thumb { display: block; width: 162px; height: 228px; }
.dim { opacity: .5; }
.label { font-size: 19.500px; line-height: 38px; font-weight: 500; }
.cover { font-family: "Inter", "Noto Sans CJK JP", sans-serif; fill: #000; }
.jp { font-family: "Noto Sans CJK JP", sans-serif; }
.doc { font: 11px "Noto Sans CJK JP", sans-serif; fill: #000; }
.tiny { font: 6.500px "Noto Sans CJK JP", sans-serif; fill: #333; }
.axis { font: 20.500px "DejaVu Sans Condensed", "Liberation Sans", sans-serif; fill: #b0b0b0; }
.stats { font: 31px "Noto Sans CJK JP", sans-serif; fill: #f0f0f0; white-space: pre; }
.scroll { flex: none; width: 25px; background: #f1f1f1; display: flex; flex-direction: column; align-items: center; }
.up { margin-top: 10px; border: 5.500px solid transparent; border-top: 0; border-bottom: 6px solid #a3a3a3; }
.down { margin: auto 0 10px; border: 5.500px solid transparent; border-bottom: 0; border-top: 6px solid #505050; }
.knob { width: 21px; height: 92px; margin-top: 9px; background: #c1c1c1; }
.knob.long { height: 524px; }
.content { flex: 1; overflow: hidden; background: #525659; padding: 5px 107px 0 106px; }
.page { box-sizing: border-box; width: 1189px; height: 1682px; padding-top: 167px; background: #fff; color: #000; box-shadow: 0 0 8px 1px rgba(0, 0, 0, .55); font-family: "Inter", "Noto Sans CJK JP", sans-serif; font-weight: 350; text-align: center; }
.page.next { margin-top: 22px; }
h1 { margin: 0; height: 66px; font: 350 44px/66px "Noto Sans CJK JP", sans-serif; white-space: nowrap; text-indent: -3px; }
.second { display: flex; justify-content: center; margin-top: 1px; text-indent: 0; }
.latin { font-family: "Inter", sans-serif; font-size: 47px; font-weight: 350; letter-spacing: .6px; }
.chart { display: block; margin: 147px 0 0 127px; }
.author { margin: 138px 0 0; font-size: 45px; line-height: 64px; }
.footer { margin: 129px 0 0; height: 36px; display: flex; justify-content: center; font-size: 25px; line-height: 36px; letter-spacing: .15px; }
.copy { margin: 0 8px 0 28px; font-size: 20px; line-height: 33px; }
</style>
